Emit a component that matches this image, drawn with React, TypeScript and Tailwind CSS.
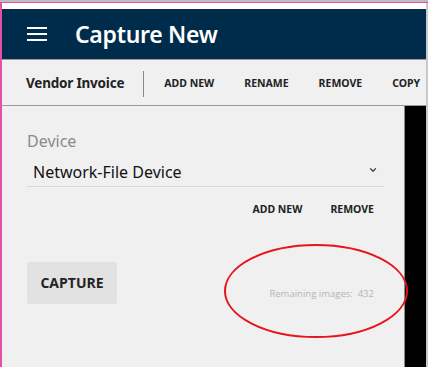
import { ChevronDown } from "lucide-react";

function ToolButton({ label }: { label: string }) {
	return (
		<button type="button" className="text-[10.5px] font-bold text-[#222] font-['Noto_Sans',sans-serif]">
			{label}
		</button>
	);
}

export default function App() {
	return (
		<div className="relative w-[428px] h-[367px] overflow-hidden bg-[#c9c9c9] font-['Open_Sans',sans-serif]">
			{/* browser strip at the very top */}
			<div className="h-[2px] bg-[#bdbdbd]" />
			<div className="flex h-[365px] border-l-2 border-t border-[#e64fa6] pr-[2px]">
				<div className="flex flex-1 flex-col bg-[#f0f0f0]">
					<div className="h-[6px] bg-white" />
					<header className="flex h-[50px] items-center bg-[#002c4b] pl-[25px]">
						<svg width="20" height="14" viewBox="0 0 20 14" className="text-white">
							<rect x="0" y="0" width="20" height="2" fill="currentColor" />
							<rect x="0" y="6" width="20" height="2" fill="currentColor" />
							<rect x="0" y="12" width="20" height="2" fill="currentColor" />
						</svg>
						<h1 className="ml-[28px] text-[23px] font-semibold leading-none text-white font-['Noto_Sans',sans-serif] tracking-[-0.3px]">
							Capture New
						</h1>
					</header>
					<div className="flex h-[47px] items-center border-t border-b border-[#9a9a9a] pl-[24px] pt-[2px]">
						<span className="text-[13.5px] font-bold text-[#222] font-['Noto_Sans',sans-serif] tracking-[-0.2px]">
							Vendor Invoice
						</span>
						<div className="ml-[19px] h-[26px] w-px bg-[#888]" />
						<div className="ml-[20px] flex gap-[30px]">
							<ToolButton label="ADD NEW" />
							<ToolButton label="RENAME" />
							<ToolButton label="REMOVE" />
							<ToolButton label="COPY" />
						</div>
					</div>
					<div className="flex flex-1">
						<main className="flex-1 pl-[25px] pr-[20px] pt-[24px]">
							<label className="block text-[16px] leading-[22px] text-[#8a8a8a] font-['Noto_Sans',sans-serif]">
								Device
							</label>
							<div className="mt-[5px] flex h-[30px] items-center justify-between border-b border-[#d8d8d8] pl-[6px] pr-[6px]">
								<span className="text-[16px] text-[#111] font-['Noto_Sans',sans-serif]">
									Network-File Device
								</span>
								<ChevronDown className="mb-[4px] h-[10px] w-[10px] text-[#444]" strokeWidth={3} />
							</div>
							<div className="mt-[15px] flex justify-end gap-[28px] pr-[10px]">
								<ToolButton label="ADD NEW" />
								<ToolButton label="REMOVE" />
							</div>
							<div className="mt-[44px] flex items-center justify-between">
								<button
									type="button"
									className="h-[42px] w-[90px] rounded-[2px] bg-[#e2e2e2] text-[14px] font-bold text-[#222]"
								>
									CAPTURE
								</button>
								<span className="mt-[22px] pr-[10px] text-[9.5px] text-[#b5b5b5]">
									Remaining images:&nbsp; 432
								</span>
							</div>
						</main>
						<div className="w-[22px] border-l border-[#8a8a8a] bg-black" />
					</div>
				</div>
			</div>
			{/* hand-drawn annotation */}
			<svg className="pointer-events-none absolute left-0 top-0" width="428" height="367">
				<ellipse cx="316" cy="291" rx="91" ry="46" fill="none" stroke="#e8141c" strokeWidth="2" />
			</svg>
		</div>
	);
}
